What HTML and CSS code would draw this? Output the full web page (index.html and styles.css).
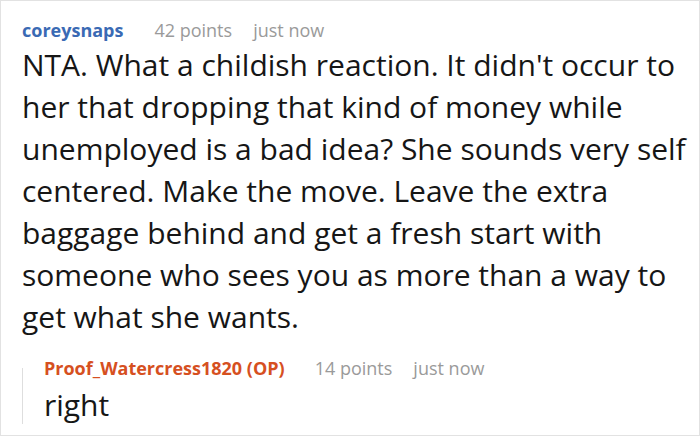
FILE: index.html
```html
<!DOCTYPE html>
<html>
<head>
<meta charset="utf-8">
<link rel="stylesheet" href="styles.css">
</head>
<body>
<div class="card">
  <div class="comment">
    <div class="meta">
      <span class="author">coreysnaps</span>
      <span class="points">42 points</span>
      <span class="time">just now</span>
    </div>
    <p class="text">NTA. What a childish reaction. It didn't occur to her that dropping that kind of money while unemployed is a bad idea? She sounds very self centered. Make the move. Leave the extra baggage behind and get a fresh start with someone who sees you as more than a way to get what she wants.</p>
    <div class="reply">
      <div class="meta">
        <span class="author op">Proof_Watercress1820 (OP)</span>
        <span class="points">14 points</span>
        <span class="time">just now</span>
      </div>
      <p class="text">right</p>
    </div>
  </div>
</div>
</body>
</html>
```

FILE: styles.css
```css
html, body {
  margin: 0;
  padding: 0;
  background: #fff;
}
.card {
  box-sizing: border-box;
  width: 700px;
  height: 436px;
  border: 1px solid #e2e2e2;
  padding: 17px 2px 0 21px;
  font-family: "Open Sans", "Noto Sans", sans-serif;
  overflow: hidden;
}
.meta {
  font-size: 18px;
  line-height: 24px;
  display: flex;
  white-space: nowrap;
}
.author {
  font-weight: 700;
  color: #3a6ab4;
  margin-right: 31px;
}
.author.op {
  color: #d6501f;
  margin-right: 30px;
}
.points {
  color: #9a9a9a;
  margin-right: 21px;
}
.time {
  color: #9a9a9a;
}
.text {
  margin: 2px 0 0;
  font-size: 30px;
  line-height: 42px;
  color: #161616;
}
.reply {
  position: relative;
  margin-top: 18px;
  padding-left: 22px;
}
.reply::before {
  content: "";
  position: absolute;
  left: 0;
  top: 12px;
  bottom: 2px;
  width: 1px;
  background: #dedede;
}
.reply .text {
  margin-top: 4px;
}
```
